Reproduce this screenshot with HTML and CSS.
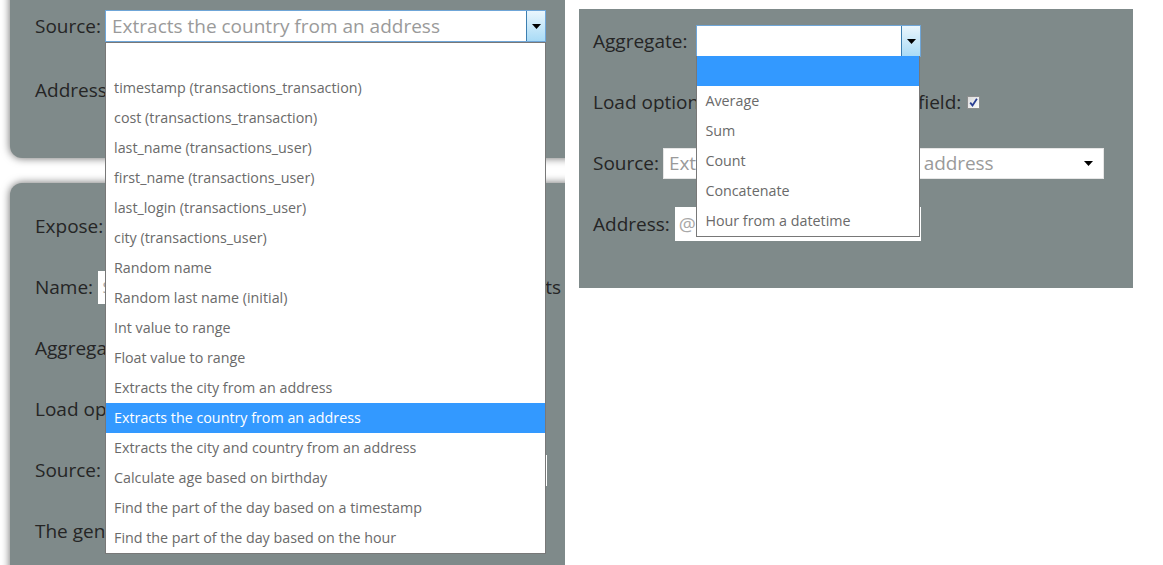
FILE: index.html
```html
<!DOCTYPE html>
<html>
<head>
<meta charset="utf-8">
<link rel="stylesheet" href="styles.css">
</head>
<body>
<div class="shot">
  <div class="shot-inner">
    <section class="panel panel-top">
      <div class="row">
        <span class="label">Source:</span>
        <div class="select focus wide">
          <span class="value">Extracts the country from an address</span>
          <span class="btn"><svg width="9" height="5" viewBox="0 0 9 5"><path d="M0 0h9L4.5 5z" fill="#000"/></svg></span>
          <ul class="list">
            <li>&nbsp;</li>
            <li>timestamp (transactions_transaction)</li>
            <li>cost (transactions_transaction)</li>
            <li>last_name (transactions_user)</li>
            <li>first_name (transactions_user)</li>
            <li>last_login (transactions_user)</li>
            <li>city (transactions_user)</li>
            <li>Random name</li>
            <li>Random last name (initial)</li>
            <li>Int value to range</li>
            <li>Float value to range</li>
            <li>Extracts the city from an address</li>
            <li class="sel">Extracts the country from an address</li>
            <li>Extracts the city and country from an address</li>
            <li>Calculate age based on birthday</li>
            <li>Find the part of the day based on a timestamp</li>
            <li>Find the part of the day based on the hour</li>
          </ul>
        </div>
      </div>
      <div class="row">
        <span class="label">Address:</span>
        <div class="field addr-left"><span class="ph">@address</span></div>
      </div>
    </section>
    <section class="panel panel-bottom">
      <div class="row"><span class="label">Expose:</span></div>
      <div class="row">
        <span class="label">Name:</span>
        <div class="field name-field"><span class="ph">$column_name</span></div>
        <span class="label after">ts as the column name</span>
      </div>
      <div class="row"><span class="label">Aggregate:</span></div>
      <div class="row"><span class="label">Load options from the selected field:</span></div>
      <div class="row">
        <span class="label">Source:</span>
        <div class="field src-left"></div>
      </div>
      <div class="row"><span class="label">The generated column</span></div>
    </section>
  </div>
</div>

<section class="panel-right">
  <div class="row">
    <span class="label">Aggregate:</span>
    <div class="select focus agg">
      <span class="value"></span>
      <span class="btn"><svg width="9" height="5" viewBox="0 0 9 5"><path d="M0 0h9L4.5 5z" fill="#000"/></svg></span>
      <ul class="list">
        <li class="sel">&nbsp;</li>
        <li>Average</li>
        <li>Sum</li>
        <li>Count</li>
        <li>Concatenate</li>
        <li>Hour from a datetime</li>
      </ul>
    </div>
  </div>
  <div class="row">
    <span class="label load-lead">Load options from the selected</span>
    <span class="label">field:</span>
    <span class="check"><svg width="13" height="13" viewBox="0 0 13 13"><path d="M3.2 6.6l2.3 2.8 4.4-6.6" fill="none" stroke="#2a3f93" stroke-width="1.8"/></svg></span>
  </div>
  <div class="row">
    <span class="label">Source:</span>
    <div class="select plain src-right">
      <span class="value">Extracts the country from an address</span>
      <span class="arrow"><svg width="9" height="5" viewBox="0 0 9 5"><path d="M0 0h9L4.5 5z" fill="#000"/></svg></span>
    </div>
  </div>
  <div class="row">
    <span class="label">Address:</span>
    <div class="field addr-right"><span class="ph">@address</span></div>
  </div>
</section>
</body>
</html>
```

FILE: styles.css
```css
* { box-sizing: border-box; }

body {
  margin: 0;
  width: 1163px;
  height: 565px;
  overflow: hidden;
  background: #fff;
  display: flex;
  align-items: flex-start;
  gap: 14px;
  font-family: "Open Sans", "Noto Sans", sans-serif;
}

.shot {
  flex: none;
  width: 565px;
  height: 565px;
  overflow: hidden;
}

.shot-inner {
  width: 640px;
  padding-left: 10px;
  display: flex;
  flex-direction: column;
  gap: 25px;
}

.panel {
  background: #7f8a8a;
  box-shadow: 0 0 9px rgba(0, 0, 0, 0.6);
  padding-left: 25px;
  display: flex;
  flex-direction: column;
}

.panel-top {
  margin-top: -40px;
  height: 198px;
  padding-top: 50px;
  gap: 32px;
  border-radius: 0 0 0 12px;
  position: relative;
  z-index: 2;
}

.panel-bottom {
  height: 420px;
  padding-top: 27px;
  gap: 29px;
  border-radius: 12px 0 0 0;
  position: relative;
  z-index: 1;
}

.row {
  display: flex;
  align-items: center;
  height: 32px;
  white-space: nowrap;
}

.row > * { flex: none; }

.label {
  font-size: 19px;
  color: #252525;
  line-height: 1;
}

/* select boxes */
.select {
  position: relative;
  height: 32px;
  background: #fff;
  display: flex;
  align-items: center;
  margin-left: 4px;
}

.select.focus {
  border: 1px solid #6fa6d8;
}

.select .value {
  flex: 1;
  font-size: 19px;
  color: #9a9a9a;
  padding-left: 6px;
  overflow: hidden;
}

.select .btn {
  width: 19px;
  height: 100%;
  border-left: 1px solid #3c7fb1;
  background: linear-gradient(#eaf6fd, #a9dbf6);
  display: flex;
  align-items: center;
  justify-content: center;
}

.select .btn svg { margin-top: 1px; }

.wide { width: 441px; }
.agg { width: 225px; margin-left: 9px; }

.list {
  position: absolute;
  left: -1px;
  top: 100%;
  width: calc(100% + 1px);
  margin: 0;
  padding: 0;
  list-style: none;
  background: #fff;
  border: 1px solid #787878;
  border-top: none;
  z-index: 5;
}

.wide .list { top: 31px; border-top: 1px solid #787878; width: 441px; }

.list li {
  height: 30px;
  line-height: 30px;
  padding-left: 8px;
  font-size: 14.3px;
  color: #6a6a6a;
}

.list li.sel {
  background: #3399ff;
  color: #fff;
}

.select.plain {
  border: 1px solid #e6e6e6;
}

.select .arrow {
  width: 22px;
  display: flex;
  justify-content: center;
  padding-right: 8px;
}

.src-right { width: 441px; height: 31px; margin-left: 4px; }
.src-right .value { padding-left: 5px; letter-spacing: -0.1px; }

/* text fields */
.field {
  background: #fff;
  height: 33px;
  display: flex;
  align-items: center;
  padding-left: 4px;
  overflow: hidden;
}

.ph {
  font-size: 19px;
  color: #a8a8a8;
}

.addr-left { width: 300px; margin-left: 5px; }
.name-field { width: 443px; margin-left: 5px; }
.after { margin-left: 4px; }
.src-left { width: 442px; height: 31px; margin-left: 4px; }

/* right panel */
.panel-right {
  flex: none;
  margin-top: 9px;
  width: 554px;
  height: 279px;
  background: #7f8a8a;
  padding: 16px 0 0 14px;
  display: flex;
  flex-direction: column;
  gap: 29px;
}

.load-lead {
  width: 325px;
  overflow: hidden;
}

.check {
  width: 13px;
  height: 13px;
  margin-left: 6px;
  border: 1px solid #8e8f8f;
  background: linear-gradient(135deg, #dcdcdc, #fbfbfb);
  display: flex;
}

.check svg { margin: -1px; }

.addr-right { width: 246px; height: 34px; margin-left: 5px; }
```
